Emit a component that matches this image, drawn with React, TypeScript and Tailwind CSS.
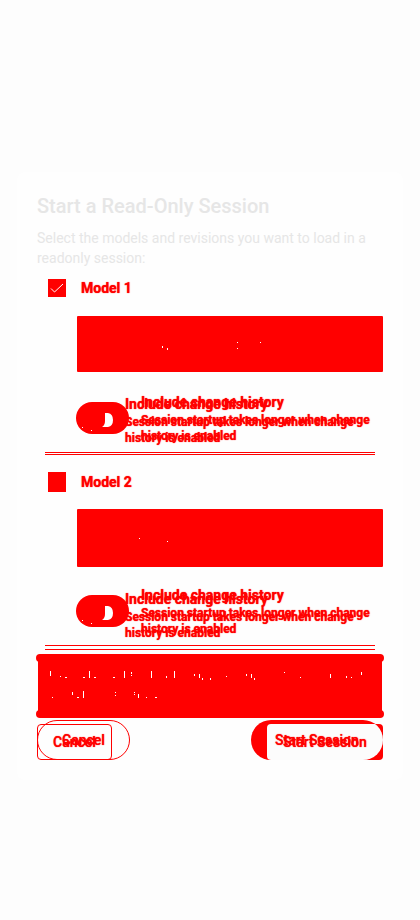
import React from "react";

type Speck = [number, number, number, number];

function Specks({ width, height, marks }: { width: number; height: number; marks: Speck[] }) {
  return (
    <svg width={width} height={height} viewBox={`0 0 ${width} ${height}`} fill="#fff" shapeRendering="crispEdges" aria-hidden="true">
      {marks.map(([x, y, w, h]) => (
        <rect key={`${x}-${y}`} x={x} y={y} width={w} height={h} />
      ))}
    </svg>
  );
}

const ALERT_MARKS: Speck[] = [
  [12, 17, 1, 5], [22, 22, 1, 1], [27, 23, 2, 1], [45, 23, 2, 1], [51, 17, 1, 7],
  [56, 23, 2, 1], [75, 23, 2, 1], [86, 17, 1, 7], [93, 18, 1, 2], [93, 21, 1, 1],
  [113, 17, 1, 7], [128, 22, 1, 2], [136, 17, 1, 7], [156, 20, 1, 2], [161, 20, 1, 4],
  [164, 24, 1, 2], [172, 24, 1, 2], [188, 22, 1, 1], [208, 20, 1, 2], [213, 20, 1, 4],
  [216, 24, 1, 2], [246, 18, 1, 1], [262, 23, 1, 1], [292, 20, 1, 4], [308, 22, 1, 2],
  [313, 23, 1, 1], [323, 18, 1, 3],
  [14, 43, 1, 1], [34, 38, 1, 3], [39, 43, 2, 1], [45, 37, 1, 7], [77, 38, 1, 1],
  [77, 41, 1, 1], [96, 38, 1, 1], [96, 40, 1, 1], [100, 40, 1, 4], [108, 43, 1, 1], [117, 43, 2, 1],
];

function Copy({ className }: { className: string }) {
  return (
    <div className={`[grid-area:1/1] [text-shadow:0_0_1px_#f00] ${className}`}>
      <div className="text-sm leading-4 font-bold">Include change history</div>
      <div className="mt-0.5 text-xs leading-4 font-bold">Session startup takes longer when change history is enabled</div>
    </div>
  );
}

function Toggle({ label }: { label: string }) {
  return (
    <button type="button" role="switch" aria-checked="false" aria-label={label} className="h-8 w-[53px] shrink-0 rounded-full bg-[#f00]">
      <svg width="53" height="32" viewBox="0 0 53 32" fill="#fff" aria-hidden="true">
        <path d="M29 11h3q5 1 5 7t-5 7h-6q3-2 3-6z" />
        <rect x="6" y="25" width="1" height="1" />
        <rect x="15" y="28" width="1" height="1" />
      </svg>
    </button>
  );
}

export default function App() {
  return (
    <main className="flex min-h-screen items-center justify-center bg-[#fdfdfd] px-[17px] pt-8 font-[Roboto,sans-serif] text-[#f00]">
      <section className="w-full max-w-[640px] rounded-lg bg-[#fefefe] p-5">
        <h1 className="text-xl leading-7 font-medium text-[#e6e6e6]">Start a Read-Only Session</h1>
        <p className="mt-2 text-sm leading-5 text-[#e6e6e6]">Select the models and revisions you want to load in a readonly session:</p>

        <div className="mt-[11px] flex h-[18px] items-center pl-[11px]">
          <input id="model-1" type="checkbox" defaultChecked className="sr-only" />
          <label htmlFor="model-1" className="flex items-center gap-[15px] text-sm font-bold [text-shadow:0_0_1px_#f00]">
            <svg width="18" height="18" viewBox="0 0 18 18" className="bg-[#f00]" fill="none" stroke="#fff" aria-hidden="true">
              <path d="M3 9.5 6.5 13 15 5" />
            </svg>
            Model 1
          </label>
        </div>
        <div className="mt-[19px] ml-10 h-14 rounded-[1px] bg-[#f00]">
          <Specks width={306} height={56} marks={[[85, 30, 1, 2], [90, 32, 1, 2], [160, 26, 1, 1], [160, 32, 1, 1], [183, 26, 1, 1]]} />
        </div>
        <div className="mt-6 ml-[39px] flex items-start pt-1.5">
          <Toggle label="Include change history for Model 1" />
          <div className="-mt-2 -ml-1 grid flex-1">
            <Copy className="pt-0.5 pr-4" />
            <Copy className="pl-4" />
          </div>
        </div>
        <div className="mx-2 mt-1.5 h-[3px] border-y border-[#f00]" />

        <div className="mt-[17px] flex h-5 items-center pl-[11px]">
          <input id="model-2" type="checkbox" className="sr-only" />
          <label htmlFor="model-2" className="flex items-center gap-[15px] text-sm font-bold [text-shadow:0_0_1px_#f00]">
            <span className="h-5 w-[18px] bg-[#f00]" />
            Model 2
          </label>
        </div>
        <div className="mt-[17px] ml-10 h-[58px] rounded-[1px] bg-[#f00]">
          <Specks width={306} height={58} marks={[[62, 29, 1, 1], [90, 32, 1, 1]]} />
        </div>
        <div className="mt-7 ml-[39px] flex items-start">
          <Toggle label="Include change history for Model 2" />
          <div className="-mt-2 -ml-1 grid flex-1">
            <Copy className="pt-1 pr-4" />
            <Copy className="pl-4" />
          </div>
        </div>
        <div className="mx-2 mt-1 h-[5px] border-y border-[#f00]" />

        <div role="status" className="relative mx-px mt-1 h-16 rounded-sm bg-[#f00]">
          <span className="absolute top-0 -left-0.5 size-2 rounded-full bg-[#f00]" />
          <span className="absolute top-0 -right-0.5 size-2 rounded-full bg-[#f00]" />
          <span className="absolute bottom-0 -left-0.5 size-2 rounded-full bg-[#f00]" />
          <span className="absolute -right-0.5 bottom-0 size-2 rounded-full bg-[#f00]" />
          <Specks width={344} height={64} marks={ALERT_MARKS} />
        </div>

        <div className="mt-0.5 flex justify-between text-sm leading-4 font-medium">
          <button type="button" className="grid h-10 w-[93px] text-left [text-shadow:0_0_1px_#f00]">
            <span className="rounded-full border border-[#f00] [grid-area:1/1]" />
            <span className="mt-1 mr-[18px] rounded-sm border border-[#f00] [grid-area:1/1]" />
            <span className="pt-[14px] pl-4 [grid-area:1/1]">Cancel</span>
            <span aria-hidden="true" className="pt-3 pl-[25px] [grid-area:1/1]">Cancel</span>
          </button>
          <button type="button" className="grid h-10 w-[132px] text-left [text-shadow:0_0_1px_#f00]">
            <span className="mt-1 ml-4 rounded-sm bg-[#f00] [grid-area:1/1]" />
            <span className="flex overflow-hidden rounded-full bg-[#f00] [grid-area:1/1]">
              <span className="mt-1 ml-4 flex-1 rounded-l-sm bg-[#fcfcfc]" />
            </span>
            <span className="pt-3 pl-6 [grid-area:1/1]">Start Session</span>
            <span aria-hidden="true" className="pt-[14px] pl-8 [grid-area:1/1]">Start Session</span>
          </button>
        </div>
      </section>
    </main>
  );
}
